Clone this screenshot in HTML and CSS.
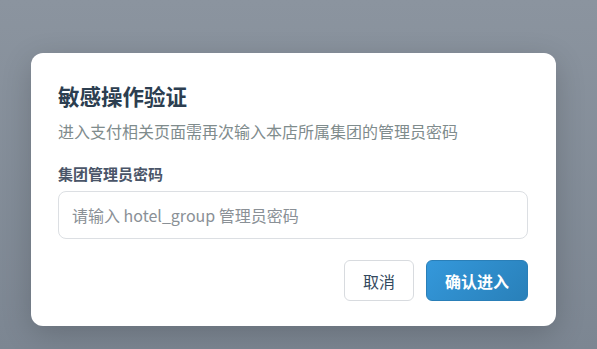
FILE: index.html
```html
<!DOCTYPE html>
<html lang="zh-CN">

<head>
    <meta charset="UTF-8">
    <title>敏感操作验证</title>
    <meta name="viewport" content="width=device-width, initial-scale=1">
    <link rel="stylesheet" href="styles.css">
</head>

<body>

    <div class="overlay">
        <div class="modal">
            <h2 class="modal-title">敏感操作验证</h2>
            <p class="modal-desc">进入支付相关页面需再次输入本店所属集团的管理员密码</p>

            <label class="field-label" for="groupPassword">集团管理员密码</label>
            <input type="password" id="groupPassword" class="field-input" placeholder="请输入 hotel_group 管理员密码">

            <div class="modal-actions">
                <button class="btn btn-cancel">取消</button>
                <button class="btn btn-confirm">确认进入</button>
            </div>
        </div>
    </div>

</body>

</html>
```

FILE: styles.css
```css
* {
    box-sizing: border-box;
}

body {
    margin: 0;
    padding: 0;
    height: 100vh;
    font-family: "Noto Sans CJK SC", "Noto Sans", sans-serif;
    background: linear-gradient(180deg, #8b949f, #7c8692);
}

.overlay {
    height: 100%;
    padding: 53px 0 0 31px;
}

.modal {
    width: 525px;
    background: #fff;
    border-radius: 12px;
    padding: 27px 28px 25px 27px;
    box-shadow: 0 8px 30px rgba(0, 0, 0, 0.18);
}

.modal-title {
    margin: 0;
    font-size: 21.5px;
    line-height: 32px;
    font-weight: 700;
    color: #2c3e50;
}

.modal-desc {
    margin: 8px 0 0;
    font-size: 16px;
    line-height: 22px;
    color: #7f8c8d;
}

.field-label {
    display: block;
    margin-top: 22px;
    font-size: 15px;
    line-height: 20px;
    font-weight: 700;
    color: #4a5568;
}

.field-input {
    display: block;
    width: 100%;
    height: 48px;
    margin-top: 7px;
    padding: 0 13px;
    border: 1px solid #dcdfe3;
    border-radius: 8px;
    font-family: inherit;
    font-size: 16px;
    color: #2c3e50;
    outline: none;
}

.field-input::placeholder {
    color: #8a9096;
}

.modal-actions {
    display: flex;
    justify-content: flex-end;
    gap: 12px;
    margin-top: 21px;
}

.btn {
    height: 41px;
    border-radius: 6px;
    font-family: inherit;
    font-size: 16px;
    cursor: pointer;
}

.btn-cancel {
    width: 70px;
    background: #fff;
    border: 1px solid #d8dbdf;
    color: #34495e;
}

.btn-confirm {
    width: 102px;
    background: linear-gradient(135deg, #3498db, #2980b9);
    border: 1px solid #2a7fb8;
    color: #fff;
    font-weight: 700;
}
```
